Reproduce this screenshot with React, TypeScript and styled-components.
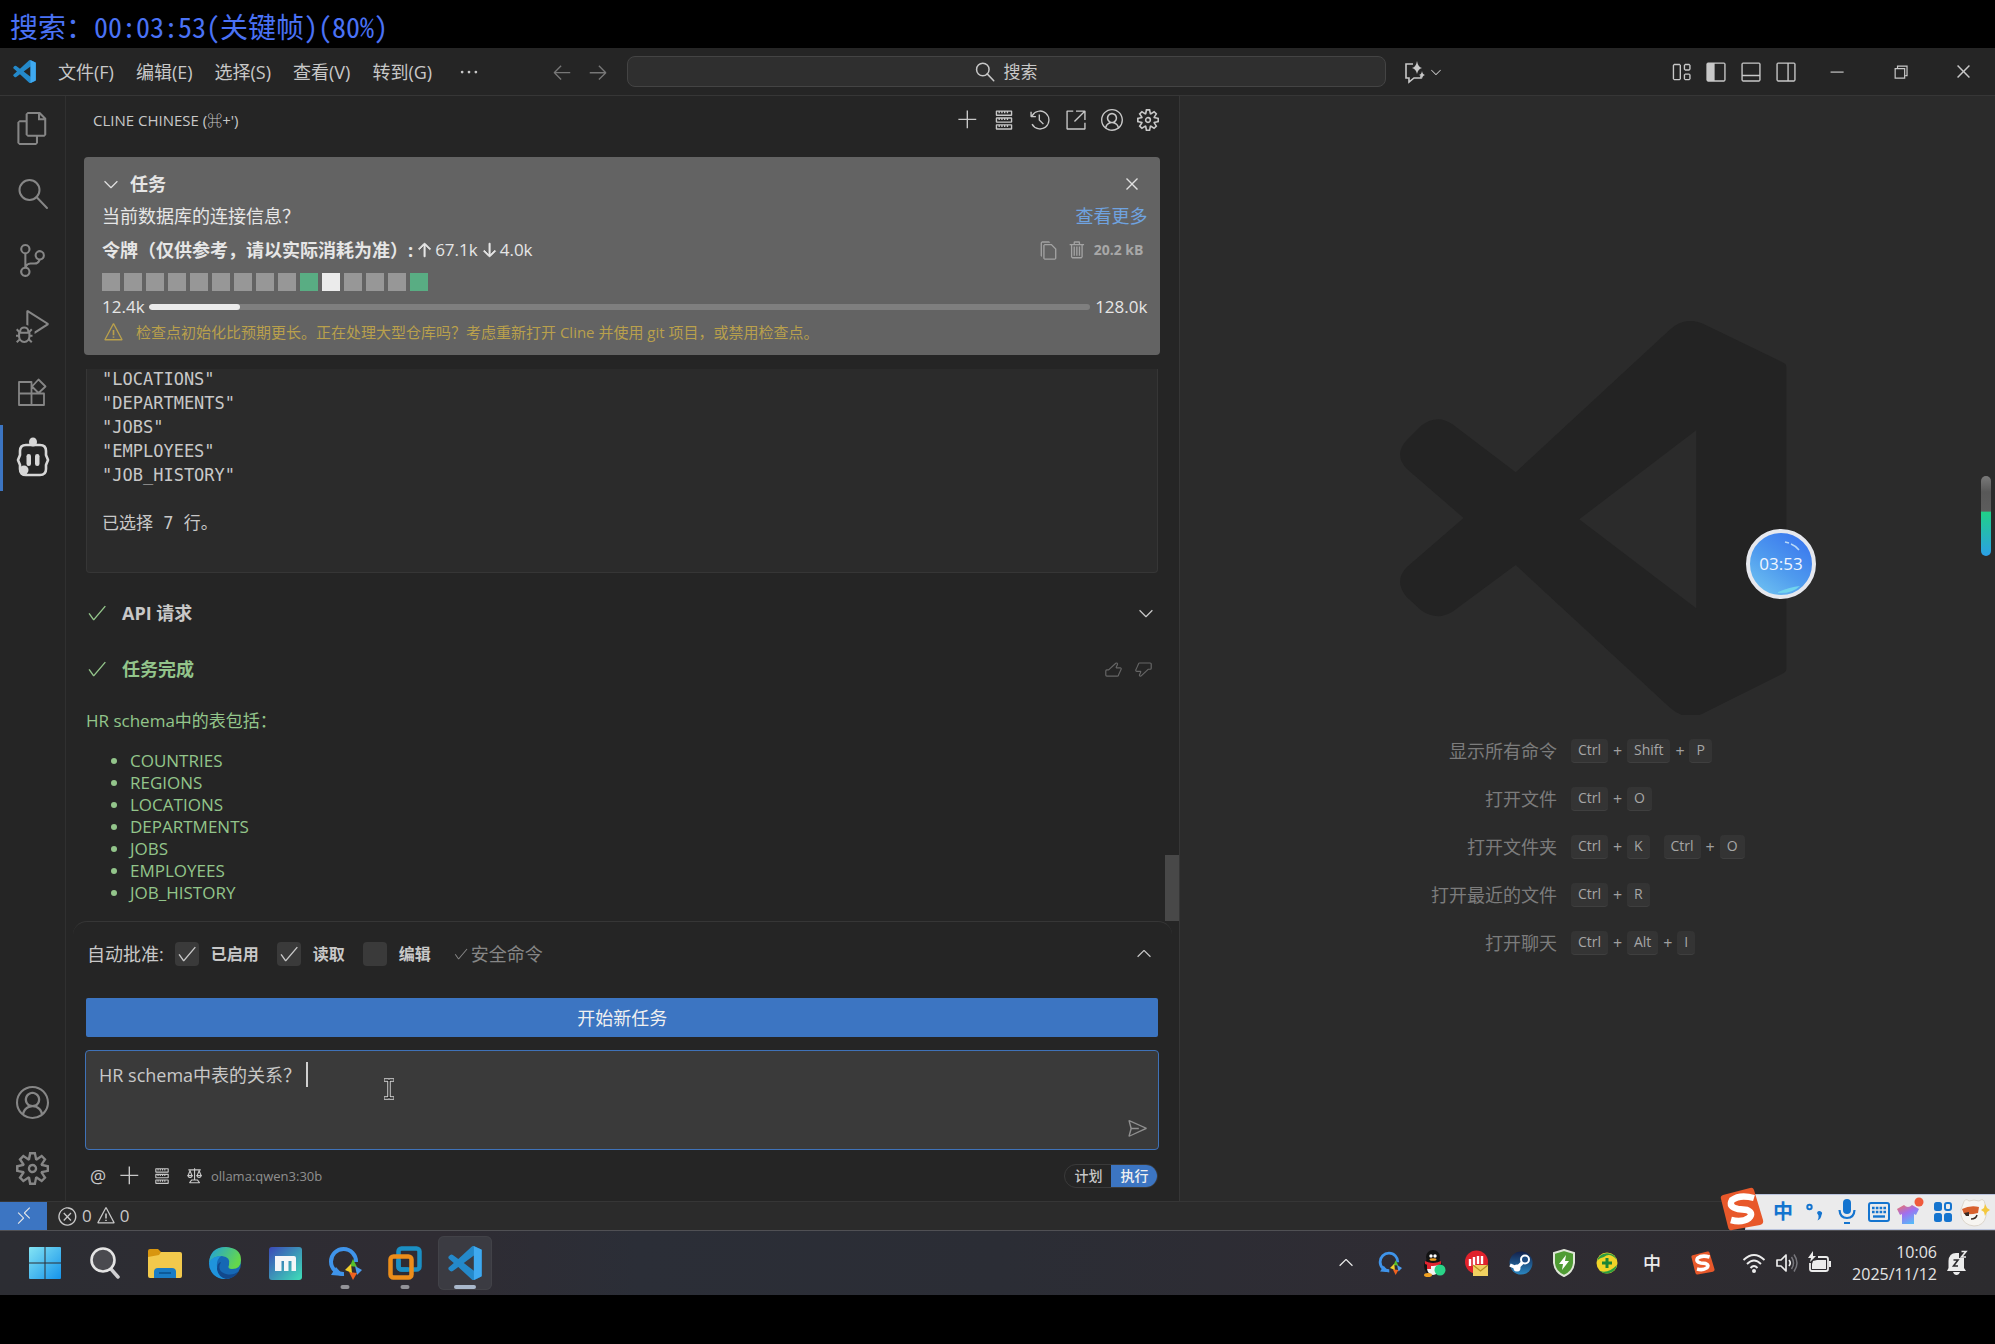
import React from "react";
import styled, { createGlobalStyle, css } from "styled-components";
import {
  VscAccount, VscAdd, VscArrowDown, VscArrowLeft, VscArrowRight, VscArrowUp, VscCheck, VscChevronDown,
  VscChevronUp, VscChromeClose, VscChromeMinimize, VscChromeRestore, VscClose, VscCopy, VscDebugAlt,
  VscEllipsis, VscError, VscFiles, VscHistory, VscLaw, VscLayout, VscLayoutPanelOff,
  VscLayoutSidebarLeft, VscLayoutSidebarRightOff, VscLinkExternal, VscRemote, VscSend,
  VscServer, VscSettingsGear, VscSourceControl, VscThumbsdown, VscThumbsup, VscTrash, VscWarning,
} from "react-icons/vsc";

const c = {
  side: "#252525",
  editor: "#2b2b2b",
  line: "#363636",
  text: "#c8c8c8",
  dim: "#868686",
  blue: "#3c75c2",
  green: "#93c58b",
  card: "#636363",
};

const Global = createGlobalStyle`
  * { box-sizing: border-box; }
  body { margin: 0; background: #000; }
  body, button, input, textarea {
    font-family: "Open Sans", "Noto Sans CJK SC", sans-serif;
    font-size: 18px;
    line-height: 24px;
    color: ${c.text};
  }
  svg { display: block; flex: none; }
`;

const Page = styled.div`
  min-height: 100vh;
  display: flex;
  flex-direction: column;
  position: relative;
`;

const SeekBanner = styled.div`
  height: 48px;
  padding: 8px 10px;
  flex: none;
  color: #4a72f5;
  font: 28px/36px "Noto Sans Mono CJK SC", "Noto Sans CJK SC", monospace;
  font-weight: 300;
  white-space: nowrap;
`;

const BottomBand = styled.div`
  height: 49px;
  flex: none;
`;

const Button = styled.button`
  appearance: none;
  border: 0;
  padding: 0;
  background: none;
  display: flex;
  align-items: center;
  justify-content: center;
  flex: none;
  cursor: pointer;
`;

/* ---------- title bar ---------- */

const TitleBar = styled.header`
  height: 47px;
  flex: none;
  background: ${c.side};
  box-shadow: 0 1px 0 ${c.line};
  position: relative;
  z-index: 1;
  display: grid;
  grid-template-columns: 314fr 380fr 305fr;
  align-items: center;
`;

const TitleGroup = styled.div`
  display: flex;
  align-items: center;
  height: 100%;
  min-width: 0;
`;

const LogoSlot = styled.span`
  padding-left: 13px;
`;

const Menu = styled.nav`
  display: flex;
  align-items: center;
  padding-left: 11px;
  flex: 1;
`;

const MenuButton = styled(Button)`
  padding: 0 11px;
  height: 32px;
  white-space: nowrap;
`;

const ToolButton = styled(Button)<{ $w?: number; $c?: string }>`
  width: ${(p) => p.$w ?? 36}px;
  height: 36px;
  color: ${(p) => p.$c ?? c.text};
`;

const NavButtons = styled.div`
  display: flex;
  padding-right: 11px;
`;

const CommandCenter = styled(Button)`
  height: 31px;
  width: 100%;
  gap: 8px;
  border: 1px solid #444;
  border-radius: 8px;
  background: #2f2f2f;
  font-size: 17px;
`;

const Copilot = styled(Button)`
  margin-left: 16px;
  gap: 2px;
`;

const Spacer = styled.div`
  flex: 1;
`;

/* ---------- workbench ---------- */

const Workbench = styled.div`
  flex: 1;
  display: flex;
  min-height: 0;
`;

const ActivityBar = styled.nav`
  width: 66px;
  flex: none;
  background: ${c.side};
  border-right: 1px solid #303030;
  display: flex;
  flex-direction: column;
`;

const ActivityButton = styled(Button)<{ $active?: boolean }>`
  height: 66px;
  color: ${(p) => (p.$active ? "#d7d7d7" : c.dim)};
  box-shadow: ${(p) => (p.$active ? `inset 3px 0 0 ${c.blue}` : "none")};
`;

const SidePanel = styled.main`
  flex: 1114 1 0;
  min-width: 0;
  background: ${c.side};
  border-right: 1px solid ${c.line};
  display: flex;
  flex-direction: column;
`;

const PanelHeader = styled.div`
  height: 50px;
  flex: none;
  display: flex;
  align-items: center;
  justify-content: space-between;
  padding: 0 13px 0 27px;
`;

const PanelTitle = styled.h1`
  margin: 0;
  font-size: 15px;
  font-weight: 400;
`;

const Row = styled.div<{ $gap?: number }>`
  display: flex;
  align-items: center;
  gap: ${(p) => p.$gap ?? 0}px;
`;

/* ---------- task card ---------- */

const TaskCard = styled.section`
  margin: 12px 19px 0 18px;
  padding: 11px 13px 10px 18px;
  border-radius: 4px;
  background: ${c.card};
  color: #e6e6e6;
`;

const CardRow = styled.div<{ $h: number }>`
  height: ${(p) => p.$h}px;
  display: flex;
  align-items: center;
  justify-content: space-between;
`;

const CardIconButton = styled(Button)<{ $w: number; $dim?: boolean }>`
  width: ${(p) => p.$w}px;
  height: 24px;
  color: ${(p) => (p.$dim ? "#a3a3a3" : "#e0e0e0")};
`;

const CardTitle = styled.h2`
  margin: 0;
  font-size: 18px;
  font-weight: 700;
`;

const MoreLink = styled.a`
  color: #6fa3e0;
  text-decoration: none;
`;

const TokenValue = styled.span`
  font-size: 17px;
`;

const TokenArrow = styled.span`
  svg {
    stroke: currentColor;
    stroke-width: 0.8px;
  }
`;

const SizeLabel = styled.span`
  font-size: 14px;
  font-weight: 700;
  color: #a8a8a8;
  padding: 0 4px 0 2px;
`;

const Blocks = styled.div`
  display: flex;
  gap: 4px;
  margin: 5px 0 4px;
`;

const Block = styled.span<{ $kind: string }>`
  width: 18px;
  height: 18px;
  background: ${(p) => (p.$kind === "g" ? "#59ad83" : p.$kind === "w" ? "#ebebeb" : "#979797")};
`;

const Track = styled.div`
  flex: 1;
  height: 6px;
  margin: 0 5px 0 4px;
  border-radius: 3px;
  background: #7f7f7f;
  overflow: hidden;
`;

const Fill = styled.div`
  height: 100%;
  border-radius: 3px;
  background: #ebebeb;
`;

const Notice = styled.div`
  height: 26px;
  padding-left: 1px;
  display: flex;
  align-items: center;
  gap: 12px;
  color: #b9a04c;
  font-size: 15px;
`;

/* ---------- chat ---------- */

const ChatScroll = styled.div`
  flex: 1 1 0;
  min-height: 0;
  margin-top: 14px;
  display: flex;
  overflow: hidden;
`;

const ChatBody = styled.div`
  flex: 1;
  min-width: 0;
  padding: 0 7px 17px 20px;
  display: flex;
  flex-direction: column;
  justify-content: flex-end;
`;

const ScrollTrack = styled.div`
  width: 14px;
  display: flex;
  align-items: flex-end;
`;

const ScrollThumb = styled.div`
  width: 14px;
  height: 12%;
  background: #484848;
`;

const Output = styled.pre`
  margin: 0 0 24px;
  flex: none;
  padding: 0 15px 13px;
  border: 1px solid ${c.line};
  border-top: 0;
  border-radius: 0 0 4px 4px;
  background: ${c.editor};
  font: 17px/24px "DejaVu Sans Mono", "Noto Sans CJK SC", monospace;
`;

const StepRow = styled.div`
  flex: none;
  height: 32px;
  margin-bottom: 24px;
  display: flex;
  align-items: center;
`;

const StepIcon = styled.span`
  width: 22px;
  margin-right: 14px;
  color: ${c.green};
`;

const StepTitle = styled.h3<{ $done?: boolean }>`
  margin: 0;
  flex: 1;
  font-size: 18px;
  font-weight: 700;
  color: ${(p) => (p.$done ? c.green : c.text)};
`;

const Answer = styled.p`
  margin: 0 0 17px;
  flex: none;
  font-size: 17px;
  color: ${c.green};
`;

const TableNames = styled.ul`
  margin: 0;
  flex: none;
  padding: 0 0 0 44px;
  color: ${c.green};
  font-size: 17px;
  line-height: 22px;
`;

/* ---------- auto approve and composer ---------- */

const AutoApprove = styled.div`
  height: 64px;
  flex: none;
  margin: 0 7px 13px;
  padding: 0 17px 0 14px;
  border-top: 1px solid ${c.line};
  border-radius: 14px 14px 0 0;
  display: flex;
  align-items: center;
`;

const Check = styled.label`
  display: flex;
  align-items: center;
  gap: 12px;
  margin-right: 18px;
  font-size: 16px;
  font-weight: 700;
`;

const CheckBoxWrap = styled.span`
  position: relative;
  display: flex;
  svg {
    position: absolute;
    inset: 1px;
    pointer-events: none;
  }
`;

const CheckBox = styled.input`
  appearance: none;
  margin: 0;
  width: 24px;
  height: 24px;
  border-radius: 4px;
  background: #3a3a3a;
`;

const ApproveLabel = styled.span`
  margin-right: 11px;
`;

const SafeHint = styled.span`
  display: flex;
  align-items: center;
  gap: 2px;
  margin-left: 4px;
  color: ${c.dim};
`;

const PrimaryButton = styled(Button)`
  height: 39px;
  margin: 0 21px 0 20px;
  border-radius: 2px;
  background: ${c.blue};
  color: #f0f0f0;
`;

const Composer = styled.div`
  position: relative;
  height: 100px;
  flex: none;
  margin: 13px 20px 0 19px;
`;

const ComposerInput = styled.textarea`
  display: block;
  width: 100%;
  height: 100%;
  padding: 12px 13px;
  resize: none;
  outline: 0;
  border: 1px solid #3f72b8;
  border-radius: 4px;
  background: #3a3a3a;
`;

const Caret = styled.span`
  position: absolute;
  left: 221px;
  top: 12px;
  width: 2px;
  height: 25px;
  background: #d0d0d0;
`;

const SendButton = styled(Button)`
  position: absolute;
  right: 11px;
  bottom: 11px;
  color: #8f8f8f;
`;

const PointerMark = styled.svg`
  position: absolute;
  left: 298px;
  top: 28px;
`;

const ComposerFooter = styled.div`
  height: 51px;
  flex: none;
  padding: 0 21px 0 16px;
  display: flex;
  align-items: center;
  justify-content: space-between;
`;

const ModelLink = styled.a`
  margin-left: 2px;
  font-size: 13px;
  color: #909090;
  text-decoration: none;
`;

const ModeSwitch = styled.div`
  display: flex;
  height: 24px;
  border: 1px solid #3a3a3a;
  border-radius: 12px;
  overflow: hidden;
`;

const ModeButton = styled(Button)<{ $on?: boolean }>`
  width: 46px;
  font-size: 14px;
  line-height: 22px;
  font-weight: 500;
  color: ${(p) => (p.$on ? "#f0f0f0" : c.text)};
  background: ${(p) => (p.$on ? c.blue : "none")};
`;

/* ---------- empty editor ---------- */

const Editor = styled.section`
  flex: 815 1 0;
  min-width: 0;
  background: ${c.editor};
  display: flex;
  flex-direction: column;
  align-items: center;
  justify-content: center;
  gap: 12px;
  padding-bottom: 8px;
`;

const Shortcuts = styled.dl`
  margin: 0;
  display: grid;
  grid-template-columns: auto auto;
  grid-auto-rows: 48px;
  column-gap: 14px;
  align-items: center;
`;

const ShortcutName = styled.dt`
  text-align: right;
  color: #7c7c7c;
`;

const ShortcutKeys = styled.dd`
  margin: 0;
  display: flex;
  align-items: center;
  font-size: 14px;
  color: #a0a0a0;
`;

const Plus = styled.span`
  width: 19px;
  font-size: 16px;
  text-align: center;
`;

const Key = styled.kbd<{ $chord?: boolean }>`
  font: inherit;
  height: 24px;
  line-height: 22px;
  padding: 0 7px;
  margin-left: ${(p) => (p.$chord ? 14 : 0)}px;
  border-radius: 4px;
  background: #343434;
  border-bottom: 1px solid #3f3f3f;
  color: #a6a6a6;
`;

/* ---------- status bar ---------- */

const StatusBar = styled.footer`
  height: 30px;
  flex: none;
  display: flex;
  align-items: stretch;
  background: ${c.editor};
  border-top: 1px solid ${c.line};
  border-bottom: 1px solid #505054;
`;

const RemoteButton = styled(Button)`
  width: 47px;
  background: ${c.blue};
  color: #e8e8e8;
`;

const Problems = styled(Button)`
  margin-left: 10px;
  gap: 4px;
  font-size: 17px;
`;

/* ---------- taskbar ---------- */

const Taskbar = styled.div`
  height: 64px;
  flex: none;
  padding: 0 18px;
  display: flex;
  align-items: center;
  background: linear-gradient(90deg, #2c2d33, #2f2c33 22%, #2b2e37 32%, #2b2d35 50%, #2f2c33 72%, #2c2b2e);
`;

const Apps = styled.div`
  flex: 1;
  display: flex;
  gap: 6px;
`;

const AppButton = styled(Button)<{ $state?: "running" | "active" }>`
  position: relative;
  width: 54px;
  height: 54px;
  border-radius: 6px;
  ${(p) => p.$state === "active" && css`background: #3b3b42; box-shadow: inset 0 0 0 1px #424248;`}
  ${(p) => p.$state && css`
    &::after {
      content: "";
      position: absolute;
      bottom: 1px;
      left: 50%;
      width: ${p.$state === "active" ? 22 : 9}px;
      height: 4px;
      border-radius: 2px;
      transform: translateX(-50%);
      background: ${p.$state === "active" ? "#a9b8cc" : "#939398"};
    }
  `}
`;

const Tray = styled.div`
  display: flex;
  align-items: center;
  color: #ececec;
`;

const TrayButton = styled(Button)<{ $w?: number }>`
  width: ${(p) => p.$w ?? 44}px;
  height: 40px;
  color: #ececec;
`;

const ImeLabel = styled.span`
  font-size: 18px;
  font-weight: 500;
`;

const Clock = styled.time`
  width: 94px;
  text-align: right;
  font-size: 16px;
  line-height: 22px;
  color: #e4e4e4;
`;

/* ---------- floating overlays ---------- */

const ImeBar = styled.div`
  position: absolute;
  right: 0;
  bottom: 114px;
  width: 250px;
  height: 36px;
  padding-left: 21px;
  display: flex;
  align-items: center;
  background: #ebebec;
  border: 1px solid #b9c3dc;
  border-right: 0;
`;

const ImeLogo = styled.svg`
  position: absolute;
  left: -26px;
  bottom: -2px;
`;

const ImeButton = styled(Button)`
  width: 32px;
  height: 34px;
  color: #1474cf;
  font-size: 20px;
  font-weight: 700;
`;

const TimerBubble = styled.div`
  position: absolute;
  right: 179px;
  top: 529px;
  width: 70px;
  height: 70px;
  border-radius: 50%;
  border: 4px solid #e6e8ee;
  display: flex;
  align-items: center;
  justify-content: center;
  background: linear-gradient(215deg, #3c7bee 15%, #4f9bee 55%, #74c8f2);
  color: #f0f6ff;
  font-size: 17px;
`;

const BubbleGloss = styled.svg`
  position: absolute;
  inset: 0;
`;

const LevelMeter = styled.div`
  position: absolute;
  right: 4px;
  top: 476px;
  width: 10px;
  height: 80px;
  border-radius: 5px;
  background: linear-gradient(180deg, #7a7a7a 0, #585858 20%, #5c5c5c 44%, #20d088 45%, #2b9fe6 100%);
`;

const LOGO_OUTER =
  "M1312 259 Q1324 248 1338 254 L1402 285 Q1404 286 1404 288 V526 Q1404 528 1402 529 L1338 561 Q1324 567 1312 556 L1191 444 L1141 481 Q1129 488 1117 480 L1105 469 Q1095 457 1105 446 L1150 407 L1105 368 Q1095 357 1105 346 L1117 334 Q1129 325 1141 333 L1191 371 Z M1333 338 L1241 408 L1333 478 Z";

const Letterpress = () => (
  <svg width="399" height="394" viewBox="1091 252 313 310" aria-hidden="true">
    <path d={LOGO_OUTER} fill="#232323" fillRule="evenodd" />
  </svg>
);

const CodeLogo = ({ size }: { size: number }) => (
  <svg width={size} height={size} viewBox="1097 252 310 310" aria-hidden="true">
    <path d={LOGO_OUTER} fill="#2489ca" fillRule="evenodd" />
    <path d="M1333 254 L1400 285 Q1404 287 1404 292 V522 Q1404 527 1400 530 L1333 561 Z" fill="#3fa9f0" />
  </svg>
);

const Glass = ({ size, stroke }: { size: number; stroke: number }) => (
  <svg width={size} height={size} viewBox="0 0 32 32" aria-hidden="true">
    <circle cx="12.500" cy="12" r="10" fill="none" stroke="currentColor" strokeWidth={stroke} />
    <path d="M19.500 19 L30 30" stroke="currentColor" strokeWidth={stroke} strokeLinecap="round" />
  </svg>
);

const ExtensionsIcon = () => (
  <svg width="31" height="31" viewBox="0 0 31 31" aria-hidden="true">
    <path
      d="M2 5 H14.500 V16.500 H2 Z M2 16.500 V28 H27 V16.500 H2 M14.500 16.500 V28 M21.500 2.500 L28.500 9.500 L21.500 16 L15 9.500 Z"
      fill="none" stroke="currentColor" strokeWidth="1.800" strokeLinejoin="round"
    />
  </svg>
);

const Robot = () => (
  <svg width="34" height="44" viewBox="0 0 34 44" aria-hidden="true">
    <ellipse cx="17" cy="6" rx="4" ry="4.500" fill="currentColor" />
    <path
      d="M10 9 H24 Q30 9 30 15 V19 L32 24 L30 29 V33 Q30 39 24 39 H10 Q4 39 4 33 V29 L2 24 L4 19 V15 Q4 9 10 9 Z"
      fill="none" stroke="currentColor" strokeWidth="2.600" strokeLinejoin="round"
    />
    <rect x="10.500" y="18" width="4.500" height="12" rx="2.200" fill="currentColor" />
    <rect x="19" y="18" width="4.500" height="12" rx="2.200" fill="currentColor" />
    <circle cx="8" cy="34" r="4.500" fill="currentColor" />
  </svg>
);

const Sparkle = () => (
  <svg width="24" height="24" viewBox="0 0 24 24" aria-hidden="true">
    <path d="M11 4 H4 V18 H7 V22 L12 18 H19 V16" fill="none" stroke="currentColor" strokeWidth="1.600" />
    <path d="M15 1 Q16 7 20 8 Q16 9 15 14 Q14 9 10 8 Q14 7 15 1 Z M20 11 Q20.500 14.500 23 15 Q20.500 15.500 20 19 Q19.500 15.500 17 15 Q19.500 14.500 20 11 Z" fill="currentColor" />
  </svg>
);

const WindowsLogo = () => (
  <svg width="32" height="32" viewBox="0 0 32 32" aria-hidden="true">
    <defs>
      <linearGradient id="win" x1="0" y1="0" x2="1" y2="1">
        <stop offset="0" stopColor="#84e4f4" />
        <stop offset="1" stopColor="#1593ea" />
      </linearGradient>
    </defs>
    <path d="M1 0H15.500V15.500H0V1Q0 0 1 0ZM16.500 0H31Q32 0 32 1V15.500H16.500ZM0 16.500H15.500V32H1Q0 32 0 31ZM16.500 16.500H32V31Q32 32 31 32H16.500Z" fill="url(#win)" />
  </svg>
);

const FinderGlass = () => (
  <svg width="32" height="32" viewBox="0 0 32 32" aria-hidden="true">
    <path d="M22 22 L29 30" stroke="#cfcfd2" strokeWidth="3.500" strokeLinecap="round" />
    <circle cx="14" cy="13" r="11.500" fill="#4a4a4f" stroke="#e4e4e4" strokeWidth="2.600" />
  </svg>
);

const FolderIcon = () => (
  <svg width="34" height="32" viewBox="0 0 34 32" aria-hidden="true">
    <path d="M0 4 Q0 2 2 2 H10 L14 6 V12 H0 Z" fill="#d8960f" />
    <path d="M0 10 L11 8 L13 5 H32 Q34 5 34 7 V29 Q34 31 32 31 H2 Q0 31 0 29 Z" fill="#f2c94c" />
    <path d="M6 31 V25 Q6 21 10 21 H24 Q28 21 28 25 V31 Z" fill="#1a7cc4" />
    <path d="M11 26 H23" stroke="#0d5a98" strokeWidth="2" />
  </svg>
);

const EdgeIcon = () => (
  <svg width="34" height="34" viewBox="0 0 34 34" aria-hidden="true">
    <defs>
      <linearGradient id="edgeTop" x1="0" y1="0" x2="1" y2="0.400">
        <stop offset="0" stopColor="#1f9fe0" />
        <stop offset="1" stopColor="#64d74c" />
      </linearGradient>
    </defs>
    <circle cx="17" cy="17" r="16" fill="#1668b4" />
    <path d="M1 17 Q2 1 18 1 Q33 2 33 14 Q33 23 24 23 Q19 23 21 19 Q23 11 14 10 Q5 10 1 17 Z" fill="url(#edgeTop)" />
    <path d="M1 17 Q4 10 13 10 Q8 14 9 21 Q11 31 22 32 Q13 35 6 29 Q1 24 1 17 Z" fill="#1f94dc" />
    <path d="M13 16 Q8 25 18 28 Q25 30 31 25 Q26 33 18 33 Q10 31 9 23 Q9 17 13 16 Z" fill="#12488c" />
  </svg>
);

const MaxthonIcon = () => (
  <svg width="33" height="33" viewBox="0 0 33 33" aria-hidden="true">
    <defs>
      <linearGradient id="mx" x1="0" y1="0" x2="1" y2="1">
        <stop offset="0" stopColor="#3b48b8" />
        <stop offset="1" stopColor="#3ee0b8" />
      </linearGradient>
    </defs>
    <rect width="33" height="33" rx="3" fill="url(#mx)" />
    <path d="M6 9 H25 Q27 9 27 11 V24 H22.500 V14 H19.500 V24 H15 V14 H12.500 V24 H6 Z" fill="#f4f6f8" />
  </svg>
);

const PinwheelIcon = ({ size }: { size: number }) => (
  <svg width={size} height={size} viewBox="0 0 34 34" aria-hidden="true">
    <path d="M28 16 A12.500 12.500 0 1 0 16 28" fill="none" stroke="#3f94ea" strokeWidth="4" />
    <path d="M3 29 L8 21 L16 30 Z" fill="#3f94ea" />
    <path d="M25 13 L29 21 L22 20 Z" fill="#55c02c" />
    <path d="M34 24 L29 29 L27 20 Z" fill="#4a9cf0" />
    <path d="M25 34 L21 26 L29 27 Z" fill="#f0621e" />
    <path d="M17 24 L23 18 L24 27 Z" fill="#f2cf2a" />
  </svg>
);

const VmwareIcon = () => (
  <svg width="34" height="34" viewBox="0 0 34 34" aria-hidden="true">
    <rect x="10.500" y="2.500" width="21" height="21" rx="3" fill="none" stroke="#1b8fc4" strokeWidth="4.500" />
    <rect x="2.500" y="10.500" width="21" height="21" rx="3" fill="none" stroke="#ec8d1a" strokeWidth="4.500" />
    <path d="M10.500 14 V20 Q10.500 23.500 14 23.500 H20" fill="none" stroke="#1b8fc4" strokeWidth="4.500" />
  </svg>
);

const PenguinIcon = () => (
  <svg width="24" height="28" viewBox="0 0 24 28" aria-hidden="true">
    <ellipse cx="11" cy="17" rx="9" ry="9" fill="#121212" />
    <ellipse cx="11" cy="19" rx="6" ry="7" fill="#f4f4f4" />
    <circle cx="11" cy="8" r="7" fill="#121212" />
    <circle cx="9" cy="7" r="1.700" fill="#fff" />
    <circle cx="13" cy="7" r="1.700" fill="#fff" />
    <ellipse cx="11" cy="10.500" rx="3.500" ry="1.300" fill="#f0a020" />
    <path d="M3 12 Q11 16 19 12 L19 15 Q11 19 3 15 Z M5 15 H9 V20 H5 Z" fill="#e02430" />
    <ellipse cx="6" cy="26" rx="4" ry="2" fill="#f0a020" />
    <circle cx="18" cy="21" r="5.500" fill="#2ad488" />
  </svg>
);

const MailIcon = () => (
  <svg width="24" height="28" viewBox="0 0 24 28" aria-hidden="true">
    <circle cx="11.500" cy="13" r="11.500" fill="#e0222c" />
    <path d="M5 17 V10 M9 17 V8 M13 15 V7 M17 15 V7" stroke="#fff" strokeWidth="2.400" />
    <rect x="8" y="16" width="15" height="11" fill="#f0d060" />
    <path d="M8 16 L15.500 22 L23 16" fill="none" stroke="#b89020" strokeWidth="1.200" />
  </svg>
);

const SteamIcon = () => (
  <svg width="24" height="26" viewBox="0 0 24 26" aria-hidden="true">
    <defs>
      <linearGradient id="steam" x1="0" y1="0" x2="0" y2="1">
        <stop offset="0" stopColor="#13204a" />
        <stop offset="1" stopColor="#2a86c0" />
      </linearGradient>
    </defs>
    <circle cx="12" cy="13" r="11.500" fill="url(#steam)" />
    <path d="M1 15 L8 18 L14 12" stroke="#fff" strokeWidth="3.500" fill="none" />
    <circle cx="8" cy="18" r="3.500" fill="#fff" />
    <circle cx="16" cy="9.500" r="4" fill="#1c4a80" stroke="#fff" strokeWidth="2" />
  </svg>
);

const ShieldIcon = () => (
  <svg width="22" height="28" viewBox="0 0 22 28" aria-hidden="true">
    <path d="M11 1 L21 4 V14 Q20 23 11 27 Q2 23 1 14 V4 Z" fill="#4f9c34" stroke="#dfe6d8" strokeWidth="2" />
    <path d="M13 6 L6 15 H10 L9 21 L16 12 H12 Z" fill="#fff" />
  </svg>
);

const PlusBallIcon = () => (
  <svg width="22" height="26" viewBox="0 0 22 26" aria-hidden="true">
    <circle cx="11" cy="13" r="10.500" fill="#f0d428" />
    <path d="M1 11 A10.500 10.500 0 0 1 21 10 Q14 2 8 7 Q3 8 1 11 Z M21 15 A10.500 10.500 0 0 1 4 21 Q12 24 21 15 Z" fill="#2a9c40" />
    <path d="M11 8 V18 M6 13 H16" stroke="#1c8434" strokeWidth="3" />
  </svg>
);

const SogouShape = () => (
  <>
    <path d="M3 8 L30 1 Q33 0 34 3 L43 33 Q44 37 40 38 L12 43 Q9 44 8 40 L1 12 Q0 9 3 8 Z" fill="#e8582a" />
    <path d="M34 11 Q20 7 12 13 Q8 20 18 22 L27 23 Q34 26 29 31 Q22 36 11 33" fill="none" stroke="#fff" strokeWidth="6.500" />
  </>
);

const SogouTile = ({ size }: { size: number }) => (
  <svg width={size} height={size} viewBox="0 0 44 44" aria-hidden="true">
    <SogouShape />
  </svg>
);

const WifiIcon = () => (
  <svg width="24" height="24" viewBox="0 0 24 24" aria-hidden="true">
    <path d="M1.500 9 Q12 -1 22.500 9 M5 13 Q12 6 19 13 M8.500 17 Q12 13 15.500 17" fill="none" stroke="currentColor" strokeWidth="1.900" />
    <circle cx="12" cy="20" r="2" fill="currentColor" />
  </svg>
);

const SpeakerIcon = () => (
  <svg width="24" height="24" viewBox="0 0 24 24" aria-hidden="true">
    <path d="M2 9 H6 L11 4 V20 L6 15 H2 Z M14 9 Q16.500 12 14 15" fill="none" stroke="currentColor" strokeWidth="1.700" strokeLinejoin="round" />
    <path d="M16.500 6 Q20.500 12 16.500 18 M19 3.500 Q25 12 19 20.500" fill="none" stroke="#77777c" strokeWidth="1.500" />
  </svg>
);

const BatteryIcon = () => (
  <svg width="24" height="24" viewBox="0 0 24 24" aria-hidden="true">
    <path d="M10 6 H18 Q20 6 20 8 V18 Q20 20 18 20 H4 Q2 20 2 18 V12" fill="none" stroke="currentColor" strokeWidth="1.800" />
    <path d="M5 10 L9 9 H18 V18 H4 V13 Z M21 10 H23 V16 H21 Z M5 0 L0 7 H3 L2 11 L8 5 H5 Z" fill="currentColor" />
  </svg>
);

const BellIcon = () => (
  <svg width="22" height="26" viewBox="0 0 22 26" aria-hidden="true">
    <path d="M2.500 11 Q3 3 10 3 H13 V8 H18 V18 L20 21 H1 L2.500 18 Z M7 22 H14 Q13 25 10.500 25 Q8 25 7 22 Z" fill="currentColor" />
    <path d="M7.500 10 H12 L7.500 16 H12" fill="none" stroke="#2c2b2e" strokeWidth="1.600" />
    <path d="M15.500 1.500 H20 L15.500 7 H20" fill="none" stroke="currentColor" strokeWidth="1.600" />
  </svg>
);

const PunctuationIcon = () => (
  <svg width="20" height="22" viewBox="0 0 20 22" aria-hidden="true">
    <circle cx="4.500" cy="6" r="2.200" fill="none" stroke="currentColor" strokeWidth="2" />
    <path d="M12 12 A2.500 2.500 0 1 1 16.500 14 Q16 18 12.500 19.500 Q14 17 13.500 14.500 Z" fill="currentColor" />
  </svg>
);

const MicIcon = () => (
  <svg width="20" height="28" viewBox="0 0 20 28" aria-hidden="true">
    <rect x="6" y="1" width="8" height="15" rx="4" fill="currentColor" />
    <path d="M2.500 12 Q3 20 10 20 Q17 20 17.500 12 M7 25 H13" fill="none" stroke="currentColor" strokeWidth="2.200" />
  </svg>
);

const KeyboardIcon = () => (
  <svg width="22" height="22" viewBox="0 0 22 22" aria-hidden="true">
    <rect x="1" y="2" width="20" height="18" rx="2" fill="none" stroke="currentColor" strokeWidth="2" />
    <path d="M4 7 H18 M4 11 H18" stroke="currentColor" strokeWidth="2.600" strokeDasharray="2.600 1.200" />
    <path d="M5 15.500 H17" stroke="currentColor" strokeWidth="2.400" />
  </svg>
);

const ShirtIcon = () => (
  <svg width="28" height="30" viewBox="0 0 28 30" aria-hidden="true">
    <defs>
      <linearGradient id="shirt" x1="0" y1="0" x2="0.600" y2="1">
        <stop offset="0" stopColor="#f07060" />
        <stop offset="0.500" stopColor="#a070f0" />
        <stop offset="1" stopColor="#58b8f8" />
      </linearGradient>
    </defs>
    <path d="M7 8 Q11 12 15 8 L22 12 L19 18 L17 17 V27 H5 V17 L3 18 L0 12 Z" fill="url(#shirt)" />
    <circle cx="22" cy="5" r="4.500" fill="#f05a3c" />
  </svg>
);

const GridIcon = () => (
  <svg width="20" height="22" viewBox="0 0 20 22" aria-hidden="true">
    <rect x="1" y="1" width="8" height="9" rx="2.500" fill="currentColor" />
    <rect x="12" y="2" width="6" height="7" rx="2" fill="none" stroke="currentColor" strokeWidth="2" />
    <rect x="1" y="12" width="8" height="9" rx="2.500" fill="currentColor" />
    <rect x="11" y="12" width="8" height="9" rx="2.500" fill="currentColor" />
  </svg>
);

const MascotIcon = () => (
  <svg width="30" height="32" viewBox="0 0 30 32" aria-hidden="true">
    <path d="M3 8 Q5 1 9 5 Q14 3 19 5 Q24 1 25 8 Q28 14 26 20 Q24 30 14 30 Q3 29 1 19 Q0 13 3 8 Z" fill="#f7f5f1" stroke="#dcd6cc" />
    <path d="M2 13 Q10 9 19 11 L18 17 Q11 19 4 18 Z" fill="#d8602c" />
    <path d="M4 17 L9 16 L9 20 L6 20 Z" fill="#3a2a22" />
    <path d="M11 23 Q16 23 17 19" fill="none" stroke="#3a2a22" strokeWidth="1.500" />
    <path d="M25 8 L27 12 L30 14 L27 16 L25 20 L24 16 L21 14 L24 12 Z" fill="#f4c83c" />
  </svg>
);

const menus = ["文件(F)", "编辑(E)", "选择(S)", "查看(V)", "转到(G)"];
const blocks = "nnnnnnnnngwnnng".split("");
const output = `"LOCATIONS"\n"DEPARTMENTS"\n"JOBS"\n"EMPLOYEES"\n"JOB_HISTORY"\n\n已选择 7 行。\n\n`;
const tables = ["COUNTRIES", "REGIONS", "LOCATIONS", "DEPARTMENTS", "JOBS", "EMPLOYEES", "JOB_HISTORY"];
const shortcuts: { name: string; chords: string[][] }[] = [
  { name: "显示所有命令", chords: [["Ctrl", "Shift", "P"]] },
  { name: "打开文件", chords: [["Ctrl", "O"]] },
  { name: "打开文件夹", chords: [["Ctrl", "K"], ["Ctrl", "O"]] },
  { name: "打开最近的文件", chords: [["Ctrl", "R"]] },
  { name: "打开聊天", chords: [["Ctrl", "Alt", "I"]] },
];
const activities = [
  { name: "资源管理器", icon: <VscFiles size={33} /> },
  { name: "搜索", icon: <Glass size={32} stroke={2} /> },
  { name: "源代码管理", icon: <VscSourceControl size={33} /> },
  { name: "运行和调试", icon: <VscDebugAlt size={33} /> },
  { name: "扩展", icon: <ExtensionsIcon /> },
];
const apps: { name: string; icon: React.ReactNode; state?: "running" | "active" }[] = [
  { name: "开始", icon: <WindowsLogo /> },
  { name: "搜索", icon: <FinderGlass /> },
  { name: "文件资源管理器", icon: <FolderIcon /> },
  { name: "Edge", icon: <EdgeIcon /> },
  { name: "Maxthon", icon: <MaxthonIcon /> },
  { name: "QQ", icon: <PinwheelIcon size={34} />, state: "running" },
  { name: "VMware", icon: <VmwareIcon />, state: "running" },
  { name: "VS Code", icon: <CodeLogo size={34} />, state: "active" },
];

const Approval = ({ label, checked }: { label: string; checked?: boolean }) => (
  <Check>
    <CheckBoxWrap>
      <CheckBox type="checkbox" defaultChecked={checked} />
      {checked && <VscCheck size={22} />}
    </CheckBoxWrap>
    {label}
  </Check>
);

export default function App() {
  return (
    <Page>
      <Global />
      <SeekBanner>搜索：00:03:53(关键帧)(80%)</SeekBanner>

      <TitleBar>
        <TitleGroup>
          <LogoSlot><CodeLogo size={23} /></LogoSlot>
          <Menu>
            {menus.map((m) => (
              <MenuButton key={m}>{m}</MenuButton>
            ))}
            <ToolButton $w={52} aria-label="更多菜单"><VscEllipsis size={22} /></ToolButton>
          </Menu>
          <NavButtons>
            <ToolButton aria-label="后退" $c="#777"><VscArrowLeft size={22} /></ToolButton>
            <ToolButton aria-label="前进" $c="#777"><VscArrowRight size={22} /></ToolButton>
          </NavButtons>
        </TitleGroup>
        <CommandCenter><Glass size={20} stroke={2.4} />搜索</CommandCenter>
        <TitleGroup>
          <Copilot aria-label="聊天"><Sparkle /><VscChevronDown size={16} /></Copilot>
          <Spacer />
          <ToolButton $w={35} aria-label="自定义布局"><VscLayout size={22} /></ToolButton>
          <ToolButton $w={35} aria-label="主侧栏"><VscLayoutSidebarLeft size={22} /></ToolButton>
          <ToolButton $w={35} aria-label="面板"><VscLayoutPanelOff size={22} /></ToolButton>
          <ToolButton $w={35} aria-label="辅助侧栏"><VscLayoutSidebarRightOff size={22} /></ToolButton>
          <ToolButton $w={66} aria-label="最小化"><VscChromeMinimize size={19} /></ToolButton>
          <ToolButton $w={63} aria-label="还原"><VscChromeRestore size={19} /></ToolButton>
          <ToolButton $w={63} aria-label="关闭"><VscChromeClose size={19} /></ToolButton>
        </TitleGroup>
      </TitleBar>

      <Workbench>
        <ActivityBar>
          {activities.map((a) => (
            <ActivityButton key={a.name} aria-label={a.name}>{a.icon}</ActivityButton>
          ))}
          <ActivityButton $active aria-label="Cline"><Robot /></ActivityButton>
          <Spacer />
          <ActivityButton aria-label="帐户"><VscAccount size={33} /></ActivityButton>
          <ActivityButton aria-label="管理"><VscSettingsGear size={33} /></ActivityButton>
        </ActivityBar>

        <SidePanel>
          <PanelHeader>
            <PanelTitle>CLINE CHINESE (⌘+')</PanelTitle>
            <Row>
              <ToolButton aria-label="新任务"><VscAdd size={22} /></ToolButton>
              <ToolButton aria-label="MCP"><VscServer size={22} /></ToolButton>
              <ToolButton aria-label="历史"><VscHistory size={22} /></ToolButton>
              <ToolButton aria-label="在编辑器中打开"><VscLinkExternal size={22} /></ToolButton>
              <ToolButton aria-label="帐户"><VscAccount size={22} /></ToolButton>
              <ToolButton aria-label="设置"><VscSettingsGear size={22} /></ToolButton>
            </Row>
          </PanelHeader>

          <TaskCard>
            <CardRow $h={32}>
              <Row $gap={10}>
                <CardIconButton $w={18} aria-label="折叠"><VscChevronDown size={22} /></CardIconButton>
                <CardTitle>任务</CardTitle>
              </Row>
              <CardIconButton $w={30} aria-label="关闭任务"><VscClose size={22} /></CardIconButton>
            </CardRow>
            <CardRow $h={32}>
              <span>当前数据库的连接信息？</span>
              <MoreLink href="#more">查看更多</MoreLink>
            </CardRow>
            <CardRow $h={36}>
              <Row $gap={2}>
                <strong>令牌（仅供参考，请以实际消耗为准）:</strong>
                <TokenArrow><VscArrowUp size={18} /></TokenArrow>
                <TokenValue>67.1k</TokenValue>
                <TokenArrow><VscArrowDown size={18} /></TokenArrow>
                <TokenValue>4.0k</TokenValue>
              </Row>
              <Row>
                <CardIconButton $w={30} $dim aria-label="复制"><VscCopy size={21} /></CardIconButton>
                <CardIconButton $w={28} $dim aria-label="删除"><VscTrash size={21} /></CardIconButton>
                <SizeLabel>20.2 kB</SizeLabel>
              </Row>
            </CardRow>
            <Blocks>
              {blocks.map((b, i) => (
                <Block key={i} $kind={b} />
              ))}
            </Blocks>
            <CardRow $h={24}>
              <TokenValue>12.4k</TokenValue>
              <Track><Fill style={{ width: `${(12.4 / 128) * 100}%` }} /></Track>
              <TokenValue>128.0k</TokenValue>
            </CardRow>
            <Notice>
              <VscWarning size={21} />
              <span>检查点初始化比预期更长。正在处理大型仓库吗？考虑重新打开 Cline 并使用 git 项目，或禁用检查点。</span>
            </Notice>
          </TaskCard>

          <ChatScroll>
            <ChatBody>
              <Output>{output}</Output>
              <StepRow>
                <StepIcon><VscCheck size={22} /></StepIcon>
                <StepTitle>API 请求</StepTitle>
                <ToolButton $w={24} aria-label="展开"><VscChevronDown size={22} /></ToolButton>
              </StepRow>
              <StepRow>
                <StepIcon><VscCheck size={22} /></StepIcon>
                <StepTitle $done>任务完成</StepTitle>
                <ToolButton $w={30} $c="#666" aria-label="有帮助"><VscThumbsup size={19} /></ToolButton>
                <ToolButton $w={30} $c="#666" aria-label="没有帮助"><VscThumbsdown size={19} /></ToolButton>
              </StepRow>
              <Answer>HR schema中的表包括：</Answer>
              <TableNames>
                {tables.map((t) => (
                  <li key={t}>{t}</li>
                ))}
              </TableNames>
            </ChatBody>
            <ScrollTrack><ScrollThumb /></ScrollTrack>
          </ChatScroll>

          <AutoApprove>
            <ApproveLabel>自动批准:</ApproveLabel>
            <Approval label="已启用" checked />
            <Approval label="读取" checked />
            <Approval label="编辑" />
            <SafeHint><VscCheck size={16} />安全命令</SafeHint>
            <Spacer />
            <ToolButton $w={22} aria-label="展开自动批准"><VscChevronUp size={22} /></ToolButton>
          </AutoApprove>

          <PrimaryButton>开始新任务</PrimaryButton>

          <Composer>
            <ComposerInput aria-label="输入任务" defaultValue="HR schema中表的关系？" spellCheck={false} />
            <Caret />
            <PointerMark width="12" height="22" viewBox="0 0 12 22" aria-hidden="true">
              <path d="M1 2 H5 L6 3 L7 2 H11 M6 3 V19 M1 20 H5 L6 19 L7 20 H11" fill="none" stroke="#d8d8d8" strokeWidth="3.400" />
              <path d="M1.500 2 H5 L6 3 L7 2 H10.500 M6 3 V19 M1.500 20 H5 L6 19 L7 20 H10.500" fill="none" stroke="#1c1c1c" strokeWidth="1.400" />
            </PointerMark>
            <SendButton aria-label="发送"><VscSend size={21} /></SendButton>
          </Composer>

          <ComposerFooter>
            <Row>
              <ToolButton $w={32} aria-label="提及">@</ToolButton>
              <ToolButton $w={32} aria-label="添加"><VscAdd size={22} /></ToolButton>
              <ToolButton $w={32} aria-label="MCP 服务器"><VscServer size={18} /></ToolButton>
              <ToolButton $w={31} aria-label="规则"><VscLaw size={18} /></ToolButton>
              <ModelLink href="#model">ollama:qwen3:30b</ModelLink>
            </Row>
            <ModeSwitch>
              <ModeButton>计划</ModeButton>
              <ModeButton $on>执行</ModeButton>
            </ModeSwitch>
          </ComposerFooter>
        </SidePanel>

        <Editor>
          <Letterpress />
          <Shortcuts>
            {shortcuts.map((s) => (
              <React.Fragment key={s.name}>
                <ShortcutName>{s.name}</ShortcutName>
                <ShortcutKeys>
                  {s.chords.map((chord, ci) =>
                    chord.map((k, ki) => (
                      <React.Fragment key={`${ci}-${ki}`}>
                        {ki > 0 && <Plus>+</Plus>}
                        <Key $chord={ci > 0 && ki === 0}>{k}</Key>
                      </React.Fragment>
                    ))
                  )}
                </ShortcutKeys>
              </React.Fragment>
            ))}
          </Shortcuts>
        </Editor>
      </Workbench>

      <StatusBar>
        <RemoteButton aria-label="远程窗口"><VscRemote size={20} /></RemoteButton>
        <Problems><VscError size={21} />0<VscWarning size={20} />0</Problems>
      </StatusBar>

      <Taskbar>
        <Apps>
          {apps.map((a) => (
            <AppButton key={a.name} aria-label={a.name} $state={a.state}>{a.icon}</AppButton>
          ))}
        </Apps>
        <Tray>
          <TrayButton aria-label="显示隐藏的图标"><VscChevronUp size={22} /></TrayButton>
          <TrayButton aria-label="QQ"><PinwheelIcon size={24} /></TrayButton>
          <TrayButton $w={43} aria-label="QQ 好友"><PenguinIcon /></TrayButton>
          <TrayButton aria-label="邮件"><MailIcon /></TrayButton>
          <TrayButton $w={43} aria-label="Steam"><SteamIcon /></TrayButton>
          <TrayButton $w={43} aria-label="安全"><ShieldIcon /></TrayButton>
          <TrayButton aria-label="加速"><PlusBallIcon /></TrayButton>
          <TrayButton $w={46}><ImeLabel>中</ImeLabel></TrayButton>
          <TrayButton $w={56} aria-label="搜狗输入法"><SogouTile size={24} /></TrayButton>
          <TrayButton $w={46} aria-label="网络"><WifiIcon /></TrayButton>
          <TrayButton $w={20} aria-label="音量"><SpeakerIcon /></TrayButton>
          <TrayButton $w={46} aria-label="电池"><BatteryIcon /></TrayButton>
          <Clock>10:06<br />2025/11/12</Clock>
          <TrayButton $w={40} aria-label="通知"><BellIcon /></TrayButton>
        </Tray>
      </Taskbar>
      <BottomBand />

      <TimerBubble>
        <BubbleGloss width="62" height="62" viewBox="0 0 62 62" aria-hidden="true">
          <path d="M35 9 L39 10 M41 11 Q46 13 49 17" fill="none" stroke="#b8d8f8" strokeWidth="1.500" />
          <path d="M28 59 Q40 54 50 53 Q42 61 28 60 Z" fill="#70d4ee" />
        </BubbleGloss>
        03:53
      </TimerBubble>
      <LevelMeter />
      <ImeBar>
        <ImeLogo width="44" height="44" viewBox="0 0 44 44" aria-hidden="true"><SogouShape /></ImeLogo>
        <ImeButton>中</ImeButton>
        <ImeButton aria-label="标点"><PunctuationIcon /></ImeButton>
        <ImeButton aria-label="语音"><MicIcon /></ImeButton>
        <ImeButton aria-label="键盘"><KeyboardIcon /></ImeButton>
        <ImeButton aria-label="皮肤"><ShirtIcon /></ImeButton>
        <ImeButton aria-label="工具箱"><GridIcon /></ImeButton>
        <ImeButton aria-label="吉祥物"><MascotIcon /></ImeButton>
      </ImeBar>
    </Page>
  );
}
